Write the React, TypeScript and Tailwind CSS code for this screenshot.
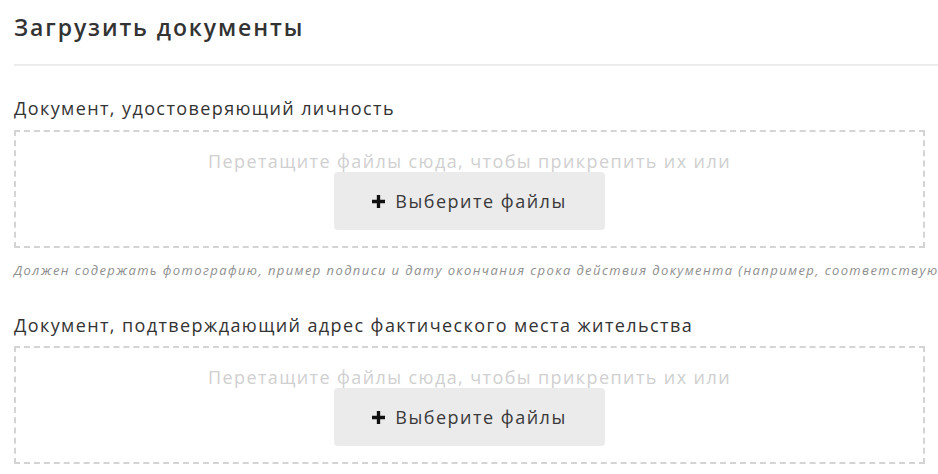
const font = { fontFamily: '"Open Sans", "Noto Sans", sans-serif' }

function Dropzone() {
  return (
    <div className="flex h-[118px] flex-col items-center border-2 border-dashed border-[#d4d4d4] pt-[18px]">
      <p className="text-[18px] leading-[22px] tracking-[1.4px] text-[#d0d0d0]">Перетащите файлы сюда, чтобы прикрепить их или</p>
      <button
        type="button"
        className="flex h-[58px] w-[271px] items-center justify-center gap-[10px] rounded-[4px] bg-[#ebebeb] text-[18px] tracking-[1.5px] text-[#3a3a3a]"
      >
        <svg width="13" height="13" viewBox="0 0 14 14" aria-hidden="true">
          <path d="M5.2 0h3.6v5.2H14v3.6H8.8V14H5.2V8.8H0V5.2h5.2z" fill="#111" />
        </svg>
        Выберите файлы
      </button>
    </div>
  )
}

export default function App() {
  return (
    <div className="h-[474px] w-[938px] overflow-hidden bg-white text-[#333]" style={font}>
      <h2 className="px-[14px] pt-[12px] text-[23px] font-semibold leading-[30px] tracking-[1.9px] text-[#333]">
        Загрузить документы
      </h2>
      <div className="ml-[14px] mt-[22px] border-t-2 border-[#ececec]" />

      <div className="pl-[14px] pr-[13px]">
        <p className="mt-[30px] text-[18px] leading-[24px] tracking-[1.4px] text-[#333]">Документ, удостоверяющий личность</p>
        <div className="mt-[10px]">
          <Dropzone />
        </div>
        <p className="mt-[14px] whitespace-nowrap text-[13px] italic leading-[16px] tracking-[1.4px] text-[#909090]">
          Должен содержать фотографию, пример подписи и дату окончания срока действия документа (например, соответствующий паспорт)
        </p>

        <p className="mt-[35px] text-[18px] leading-[24px] tracking-[1.4px] text-[#333]">
          Документ, подтверждающий адрес фактического места жительства
        </p>
        <div className="mt-[9px]">
          <Dropzone />
        </div>
      </div>
    </div>
  )
}
